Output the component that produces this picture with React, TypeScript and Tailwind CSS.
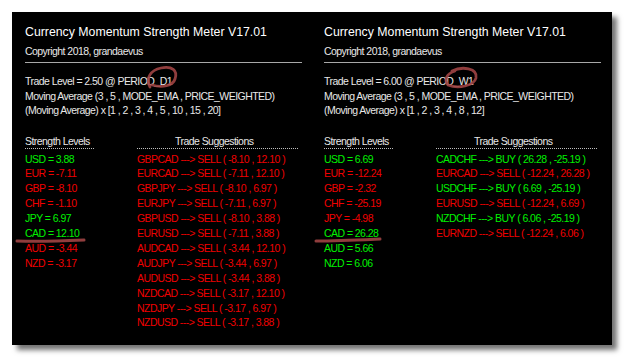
// Currency Momentum Strength Meter — two panels (D1 / W1) side by side
import React from "react";

type Row = { text: string; up: boolean };

type Panel = {
  level: string;
  period: string;
  mas: string;
  strengths: Row[];
  trades: Row[];
};

const PANELS: Panel[] = [
  {
    level: "2.50",
    period: "D1",
    mas: "[1 , 2 , 3 , 4 , 5 , 10 , 15 , 20]",
    strengths: [
      { text: "USD = 3.88", up: true },
      { text: "EUR = -7.11", up: false },
      { text: "GBP = -8.10", up: false },
      { text: "CHF = -1.10", up: false },
      { text: "JPY = 6.97", up: true },
      { text: "CAD = 12.10", up: true },
      { text: "AUD = -3.44", up: false },
      { text: "NZD = -3.17", up: false },
    ],
    trades: [
      { text: "GBPCAD ---> SELL ( -8.10 , 12.10 )", up: false },
      { text: "EURCAD ---> SELL ( -7.11 , 12.10 )", up: false },
      { text: "GBPJPY ---> SELL ( -8.10 , 6.97 )", up: false },
      { text: "EURJPY ---> SELL ( -7.11 , 6.97 )", up: false },
      { text: "GBPUSD ---> SELL ( -8.10 , 3.88 )", up: false },
      { text: "EURUSD ---> SELL ( -7.11 , 3.88 )", up: false },
      { text: "AUDCAD ---> SELL ( -3.44 , 12.10 )", up: false },
      { text: "AUDJPY ---> SELL ( -3.44 , 6.97 )", up: false },
      { text: "AUDUSD ---> SELL ( -3.44 , 3.88 )", up: false },
      { text: "NZDCAD ---> SELL ( -3.17 , 12.10 )", up: false },
      { text: "NZDJPY ---> SELL ( -3.17 , 6.97 )", up: false },
      { text: "NZDUSD ---> SELL ( -3.17 , 3.88 )", up: false },
    ],
  },
  {
    level: "6.00",
    period: "W1",
    mas: "[1 , 2 , 3 , 4 , 8 , 12]",
    strengths: [
      { text: "USD = 6.69", up: true },
      { text: "EUR = -12.24", up: false },
      { text: "GBP = -2.32", up: false },
      { text: "CHF = -25.19", up: false },
      { text: "JPY = -4.98", up: false },
      { text: "CAD = 26.28", up: true },
      { text: "AUD = 5.66", up: true },
      { text: "NZD = 6.06", up: true },
    ],
    trades: [
      { text: "CADCHF ---> BUY ( 26.28 , -25.19 )", up: true },
      { text: "EURCAD ---> SELL ( -12.24 , 26.28 )", up: false },
      { text: "USDCHF ---> BUY ( 6.69 , -25.19 )", up: true },
      { text: "EURUSD ---> SELL ( -12.24 , 6.69 )", up: false },
      { text: "NZDCHF ---> BUY ( 6.06 , -25.19 )", up: true },
      { text: "EURNZD ---> SELL ( -12.24 , 6.06 )", up: false },
    ],
  },
];

const color = (up: boolean) => (up ? "text-[#00f000]" : "text-[#f00000]");

function MeterColumn({ p }: { p: Panel }) {
  return (
    <div className="flex w-[277px] flex-col">
      <div className="h-[16px] text-[12.3px] leading-[16px] tracking-[0px] text-white">
        Currency Momentum Strength Meter V17.01
      </div>
      <div className="mt-[4.5px] h-[14px] leading-[14px] text-[#e8e8e8]">
        Copyright 2018, grandaevus
      </div>
      <div className="mt-[4px] h-px w-full bg-[#a8a8a8]" />

      {/* 設定 */}
      <div className="mt-[11px] flex flex-col text-[#e8e8e8] leading-[14.5px]">
        <div>
          Trade Level = {p.level} @ PERIOD_{p.period}
        </div>
        <div>Moving Average (3 , 5 , MODE_EMA , PRICE_WEIGHTED)</div>
        <div>(Moving Average) x {p.mas}</div>
      </div>

      {/* 強弱 + 売買候補 */}
      <div className="mt-[16px] flex">
        <div className="flex w-[112px] flex-col">
          <div className="w-[69px] border-b border-dotted border-[#bdbdbd] leading-[14px] text-[#e8e8e8]">
            Strength Levels
          </div>
          <div className="mt-[3px] flex flex-col leading-[14.9px]">
            {p.strengths.map((r) => (
              <div key={r.text} className={color(r.up)}>
                {r.text}
              </div>
            ))}
          </div>
        </div>
        <div className="flex flex-col">
          <div className="w-[161px] border-b border-dotted border-[#bdbdbd] pl-[38px] leading-[14px] text-[#e8e8e8]">
            Trade Suggestions
          </div>
          <div className="mt-[3px] flex flex-col leading-[14.9px]">
            {p.trades.map((r) => (
              <div key={r.text} className={color(r.up)}>
                {r.text}
              </div>
            ))}
          </div>
        </div>
      </div>
    </div>
  );
}

export default function App() {
  return (
    <div
      className="relative h-[358px] w-[625px] bg-white pl-[12px] pt-[12px] text-[10.5px] tracking-[-0.55px]"
      style={{ fontFamily: '"Liberation Sans", Arial, sans-serif' }}
    >
      <div className="flex h-[333px] w-[600px] gap-[22px] bg-black pl-[13px] pt-[11.5px] shadow-[5px_5px_5px_rgba(0,0,0,0.55)]">
        {PANELS.map((p) => (
          <MeterColumn key={p.period} p={p} />
        ))}
      </div>

      {/* 手書きの赤い注釈 */}
      <svg
        className="pointer-events-none absolute left-0 top-0"
        width={625}
        height={358}
        fill="none"
        stroke="#a04444"
        strokeLinecap="round"
        strokeOpacity={0.9}
      >
        <path
          d="M150 87 C145 78 151 70 161 68 C172 66 178 70 175 79 C173 86 162 88 152 85"
          strokeWidth={2.8}
        />
        <path
          d="M452 71 C462 66 478 68 476 78 C474 86 458 89 448 85 C444 80 446 74 455 71"
          strokeWidth={2.8}
        />
        <path d="M17 241 C40 242 62 241 84 240" strokeWidth={3} />
        <path d="M316 241 C338 241 358 240 380 239" strokeWidth={3} />
      </svg>
    </div>
  );
}
